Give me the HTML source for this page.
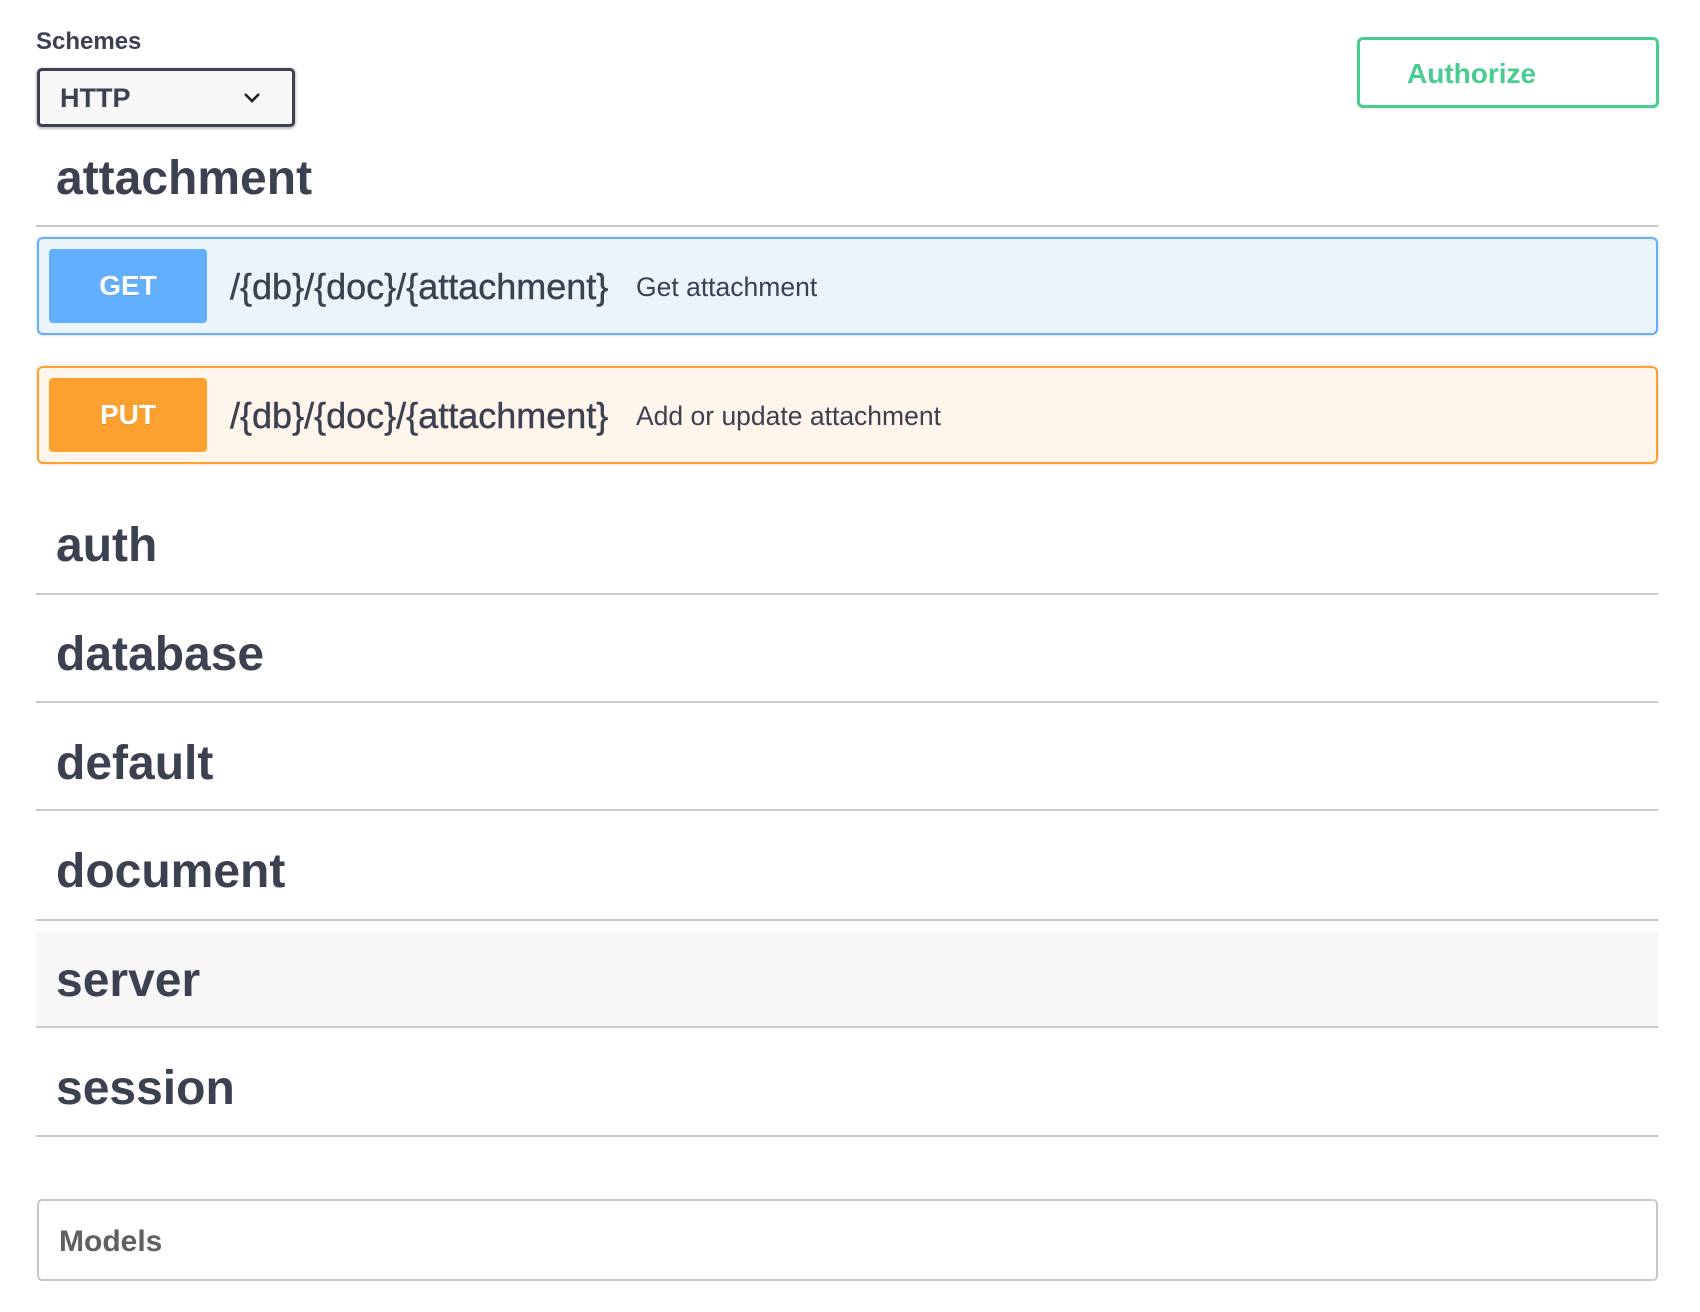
<!DOCTYPE html>
<html><head><meta charset="utf-8"><style>
html,body{margin:0;padding:0;background:#fff;width:1700px;height:1312px;overflow:hidden;font-family:"Liberation Sans",sans-serif;color:#3b4151}
.a{position:absolute}
.tag{position:absolute;left:56px;font-size:48px;font-weight:bold;color:#3b4151;line-height:1}
.line{position:absolute;left:36px;width:1622px;height:2px;background:#c5c8cd}
.op{position:absolute;left:37px;width:1617px;height:94px;border:2px solid;border-radius:6px;box-shadow:0 0 3px rgba(0,0,0,.19)}
.badge{position:absolute;left:10px;top:10px;width:158px;height:74px;border-radius:4px;color:#fff;font-weight:bold;font-size:28px;text-align:center;line-height:74px;text-shadow:0 1px 0 rgba(0,0,0,.1)}
.path{position:absolute;left:191px;top:1px;line-height:94px;font-size:36px;color:#3b4151;-webkit-text-stroke:0.4px #3b4151}
.desc{position:absolute;left:597px;top:1px;line-height:94px;font-size:26.5px;color:#3b4151}
</style></head><body>
<div class="a" style="left:36px;top:28px;font-size:24px;font-weight:bold;">Schemes</div>
<div class="a" style="left:37px;top:68px;width:252px;height:53px;border:3px solid #3b4151;border-radius:5px;background:#f7f7f7;box-shadow:0 1px 2px 1px rgba(0,0,0,.25)">
<div class="a" style="left:20px;top:1px;line-height:53px;font-size:27px;font-weight:bold">HTTP</div>
<svg class="a" style="left:203px;top:19px" width="18" height="16" viewBox="0 0 18 16"><path d="M2 4 L9 11 L16 4" fill="none" stroke="#222" stroke-width="2.6"/></svg>
</div>
<div class="a" style="left:1357px;top:37px;width:296px;height:65px;border:3px solid #49cc90;border-radius:6px;box-shadow:0 1px 2px rgba(0,0,0,.1)">
<div class="a" style="left:47px;top:1px;line-height:65px;font-size:28px;font-weight:bold;color:#49cc90">Authorize</div>
</div>

<div class="tag" style="top:155px">attachment</div>
<div class="line" style="top:225px"></div>

<div class="op" style="top:237px;border-color:#61affe;background:#ebf3fb">
<div class="badge" style="background:#61affe">GET</div>
<div class="path">/{db}/{doc}/{attachment}</div>
<div class="desc">Get attachment</div>
</div>
<div class="op" style="top:366px;border-color:#fca130;background:#fff5ea">
<div class="badge" style="background:#fca130">PUT</div>
<div class="path">/{db}/{doc}/{attachment}</div>
<div class="desc">Add or update attachment</div>
</div>

<div class="tag" style="top:522px">auth</div>
<div class="line" style="top:593px"></div>
<div class="tag" style="top:631px">database</div>
<div class="line" style="top:701px"></div>
<div class="tag" style="top:740px">default</div>
<div class="line" style="top:809px"></div>
<div class="tag" style="top:848px">document</div>
<div class="line" style="top:919px"></div>
<div class="a" style="left:36px;top:931px;width:1622px;height:95px;background:#f7f7f7"></div>
<div class="tag" style="top:957px">server</div>
<div class="line" style="top:1026px"></div>
<div class="tag" style="top:1065px">session</div>
<div class="line" style="top:1135px"></div>

<div class="a" style="left:37px;top:1199px;width:1617px;height:78px;border:2px solid #c7c7c7;border-radius:5px">
<div class="a" style="left:20px;top:2px;line-height:78px;font-size:30px;font-weight:bold;color:#606060">Models</div>
</div>
</body></html>
